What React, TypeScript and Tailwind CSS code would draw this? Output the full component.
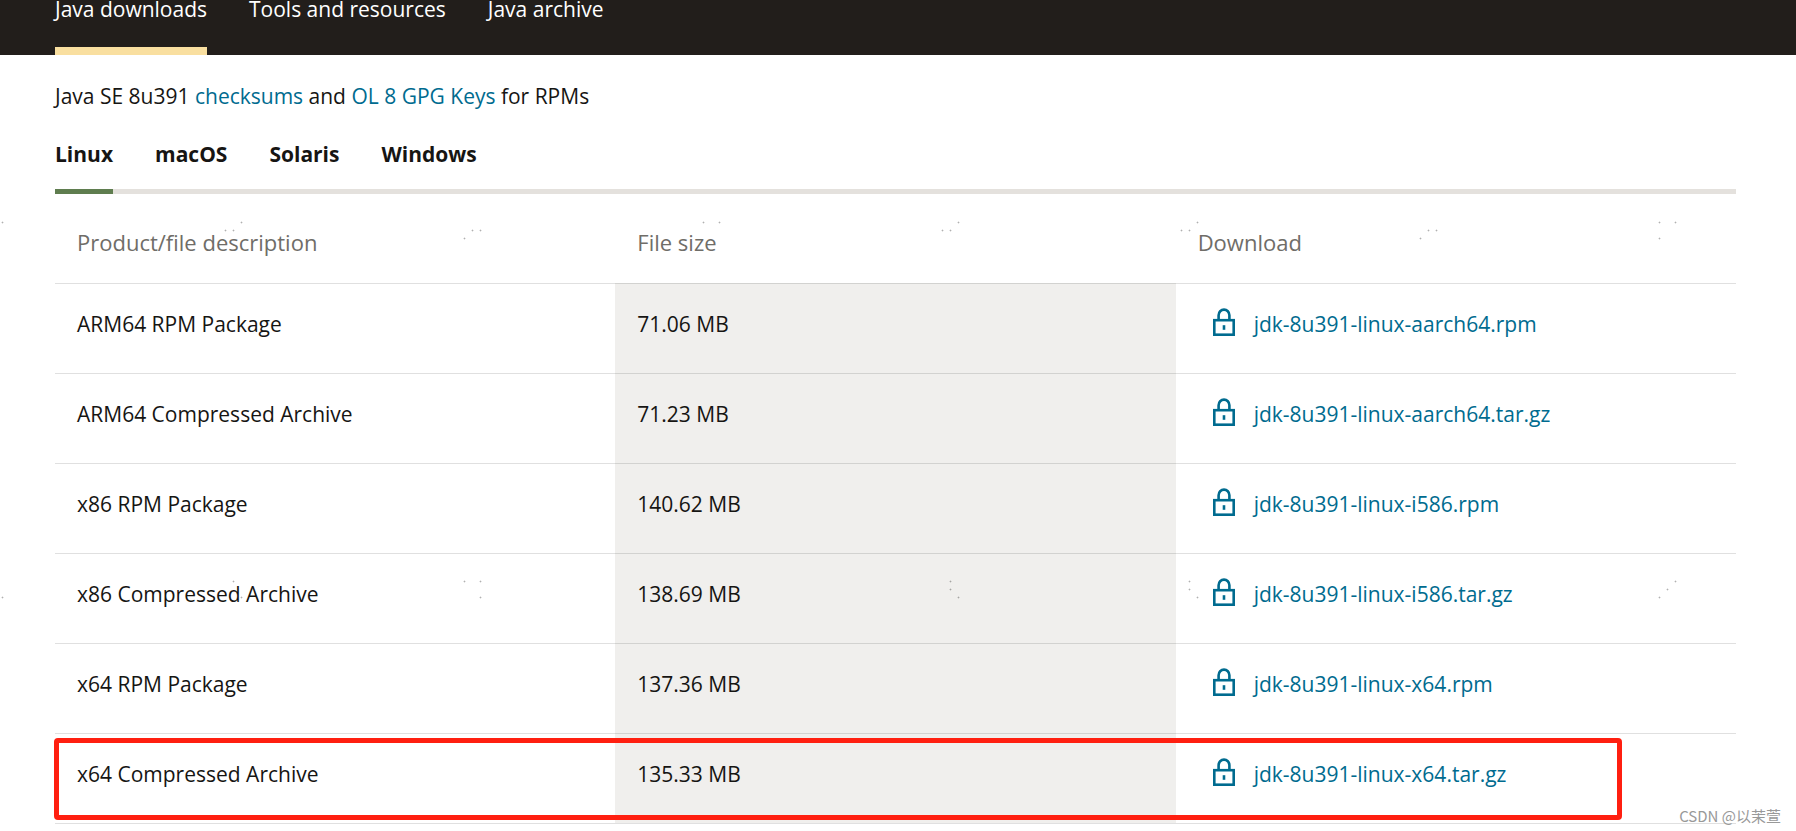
import clsx from 'clsx'

const NAV = ['Java downloads', 'Tools and resources', 'Java archive']
const PLATFORMS = ['Linux', 'macOS', 'Solaris', 'Windows']

const FILES = [
  { name: 'ARM64 RPM Package', size: '71.06 MB', file: 'jdk-8u391-linux-aarch64.rpm' },
  { name: 'ARM64 Compressed Archive', size: '71.23 MB', file: 'jdk-8u391-linux-aarch64.tar.gz' },
  { name: 'x86 RPM Package', size: '140.62 MB', file: 'jdk-8u391-linux-i586.rpm' },
  { name: 'x86 Compressed Archive', size: '138.69 MB', file: 'jdk-8u391-linux-i586.tar.gz' },
  { name: 'x64 RPM Package', size: '137.36 MB', file: 'jdk-8u391-linux-x64.rpm' },
  { name: 'x64 Compressed Archive', size: '135.33 MB', file: 'jdk-8u391-linux-x64.tar.gz' },
]

// faint specks scattered over the page background
const SPECKS = [
  [2, 222], [241, 222], [225, 230], [233, 230], [472, 230], [480, 230], [464, 238],
  [703, 222], [719, 222], [942, 230], [950, 230], [958, 222], [1181, 230], [1189, 230],
  [1197, 222], [1428, 230], [1436, 230], [1420, 238], [1659, 222], [1675, 222], [1659, 238],
  [2, 597], [233, 581], [241, 597], [464, 581], [480, 581], [480, 597],
  [950, 581], [950, 589], [958, 597], [1189, 581], [1189, 589], [1197, 597],
  [1659, 597], [1667, 589], [1675, 581],
]

function LockIcon() {
  return (
    <svg width="22" height="28" viewBox="0 0 22 28" fill="none" stroke="currentColor" strokeWidth="2.6" aria-hidden="true">
      <rect x="1.3" y="12.2" width="19.4" height="14.5" />
      <path d="M5.6 12V7.2a5.4 5.6 0 0 1 10.8 0V12" />
      <path d="M11 17.2v4.6" />
    </svg>
  )
}

function Specks() {
  return (
    <svg className="pointer-events-none absolute left-0 top-0 h-[620px] w-full" aria-hidden="true">
      {SPECKS.map(([x, y]) => (
        <g key={`${x}-${y}`}>
          <path d={`M${x - 1} ${y + 0.5}h3M${x + 0.5} ${y - 1}v3`} stroke="#000" strokeOpacity="0.1" />
          <rect x={x} y={y} width="1" height="1" fill="#000" fillOpacity="0.14" />
        </g>
      ))}
    </svg>
  )
}

export default function App() {
  return (
    <div className='relative bg-white font-["Open_Sans","Noto_Sans",sans-serif] text-[21px] leading-8 text-[#161513]'>
      <header className="h-[55px] bg-[#221e1b] pl-[55px]">
        <nav className="flex h-full items-end gap-[42px]">
          {NAV.map((item, i) => (
            <a
              key={item}
              href="#"
              className={clsx('border-b-8 pb-[22px] text-white', i === 0 ? 'border-[#f9dfa0]' : 'border-transparent')}
            >
              {item}
            </a>
          ))}
        </nav>
      </header>

      <main className="pb-[7px] pl-[55px] pr-[60px] pt-[25px]">
        <p>
          Java SE 8u391 <a href="#" className="text-[#006b8f]">checksums</a> and{' '}
          <a href="#" className="text-[#006b8f]">OL 8 GPG Keys</a> for RPMs
        </p>

        <div role="tablist" className="mt-[26px] flex gap-[42px] bg-[linear-gradient(#e4e1dd,#e4e1dd)] bg-[length:100%_5px] bg-bottom bg-no-repeat">
          {PLATFORMS.map((name, i) => (
            <button
              key={name}
              role="tab"
              aria-selected={i === 0}
              className={clsx('border-b-5 pb-[19px] font-bold', i === 0 ? 'border-[#5f7d4f]' : 'border-transparent')}
            >
              {name}
            </button>
          ))}
        </div>

        <div className="relative">
          <table className="w-full table-fixed border-separate border-spacing-0 border-b border-black/12 text-left">
            <thead>
              <tr className="align-top text-[22px] text-[#6f6d68]">
                <th className="h-[89px] px-[22px] pt-8 font-medium">Product/file description</th>
                <th className="px-[22px] pt-8 font-medium">File size</th>
                <th className="px-[22px] pt-8 font-medium">Download</th>
              </tr>
            </thead>
            <tbody>
              {FILES.map(({ name, size, file }) => (
                <tr key={file} className="align-top *:border-t *:border-black/12">
                  <td className="h-[90px] px-[22px] pt-6">{name}</td>
                  <td className="bg-[#f0efed] px-[22px] pt-6">{size}</td>
                  <td className="pl-[37px] pt-6">
                    <a href="#" className="flex gap-[19px] text-[#006b8f]">
                      <LockIcon />
                      {file}
                    </a>
                  </td>
                </tr>
              ))}
            </tbody>
          </table>
          <div className="pointer-events-none absolute -left-px bottom-1 right-[114px] h-[82px] rounded-sm border-5 border-[#ff1f10]" />
        </div>
      </main>

      <Specks />
      <span className='absolute bottom-0 right-[15px] font-["Noto_Sans_CJK_SC",sans-serif] text-[15px] leading-[30px] text-[#999]'>
        CSDN @以茉萱
      </span>
    </div>
  )
}
